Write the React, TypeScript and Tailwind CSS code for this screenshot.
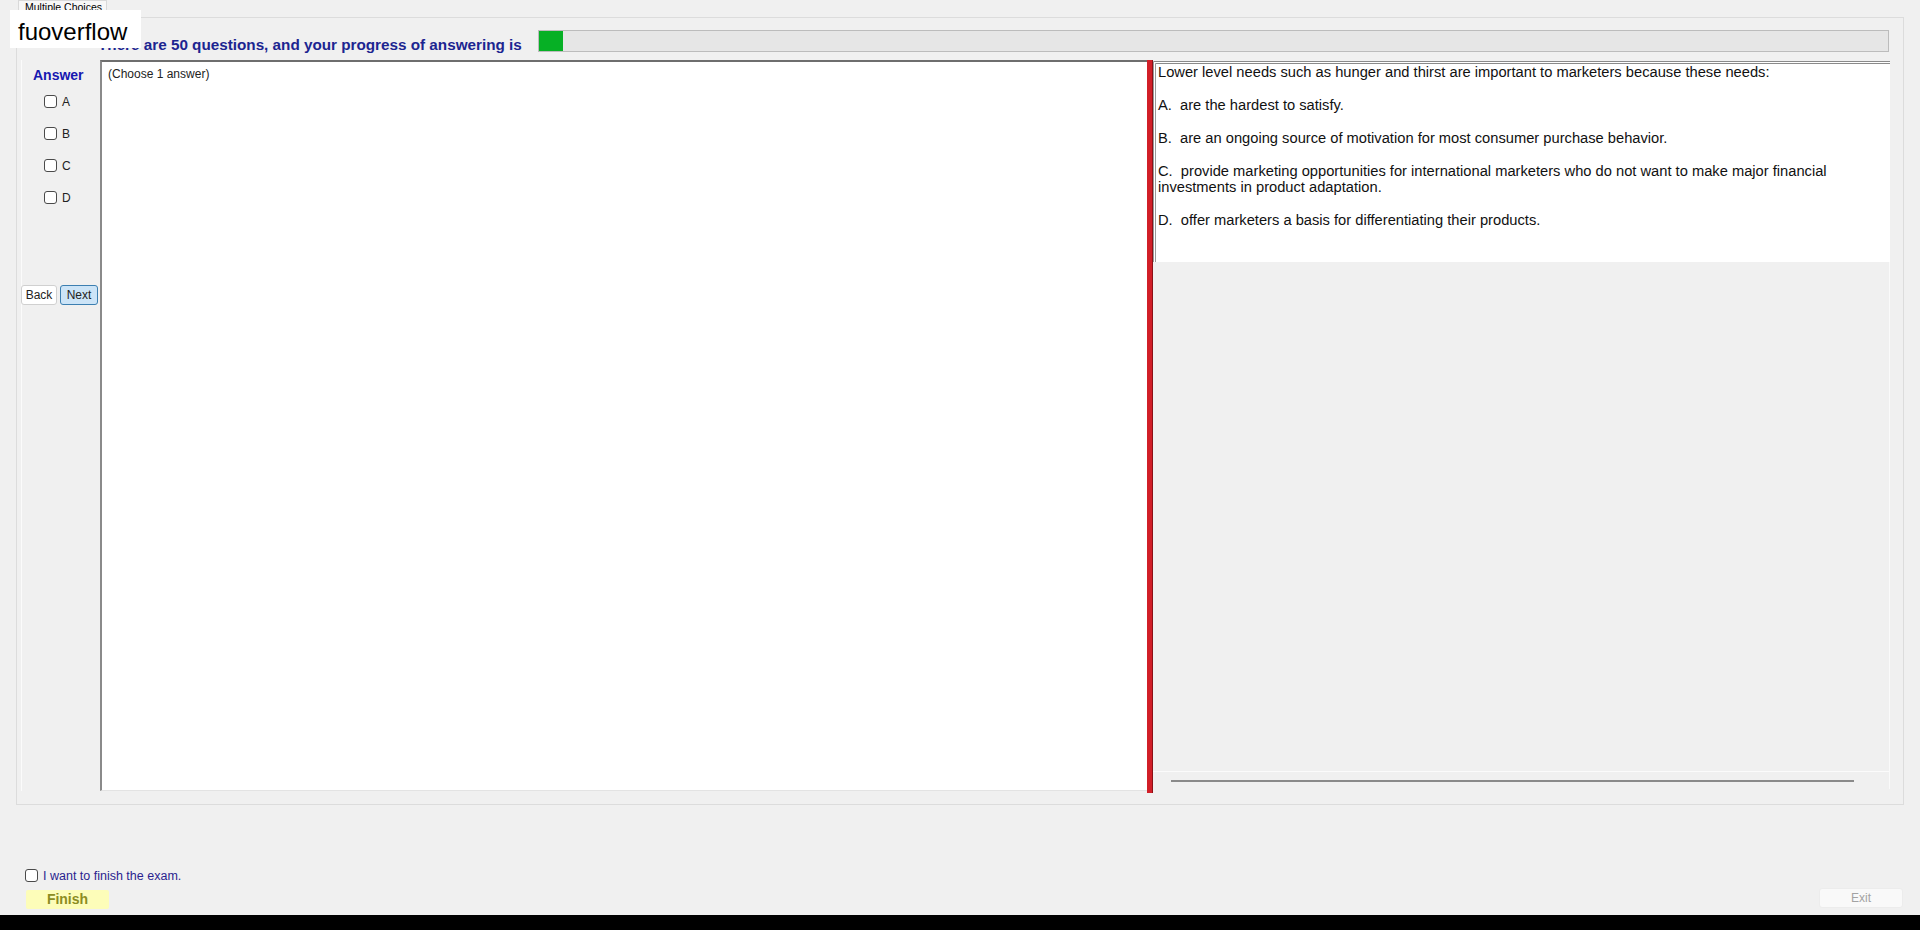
import React from "react";

const Box = () => (
  <span className="inline-block w-[13px] h-[13px] rounded-[3px] border border-[#4a4a4a] bg-white" />
);

const options = [
  "A.  are the hardest to satisfy.",
  "B.  are an ongoing source of motivation for most consumer purchase behavior.",
  "C.  provide marketing opportunities for international marketers who do not want to make major financial investments in product adaptation.",
  "D.  offer marketers a basis for differentiating their products.",
];

export default function App() {
  return (
    <div className="relative w-[1920px] h-[930px] bg-[#f0f0f0] flex flex-col overflow-hidden font-['Liberation_Sans',Arial,sans-serif] text-black">
      {/* tab strip */}
      <div className="h-[17px] pl-[18px] flex items-end">
        <div className="h-[17px] w-[89px] border border-b-0 border-[#d9d9d9] bg-[#f7f7f7] text-[10.5px] leading-[13px] pl-[6px] overflow-hidden">
          Multiple Choices
        </div>
      </div>

      {/* tab page */}
      <div className="mx-[16px] h-[788px] border border-[#dcdcdc] flex flex-col">
        {/* progress header */}
        <div className="h-[42px] flex items-start">
          <div className="pl-[81px] pt-[18px] text-[15.25px] leading-[17px] font-bold text-[#1c2590] w-[521px] whitespace-nowrap">
            There are 50 questions, and your progress of answering is
          </div>
          <div className="mt-[12px] h-[22px] flex-1 mr-[14px] border border-[#bcbcbc] bg-[#e6e6e6]">
            <div className="h-full w-[24px] bg-[#06b025]" />
          </div>
        </div>

        {/* body */}
        <div className="flex h-[731px]">
          {/* answer column */}
          <div className="w-[83px] flex flex-col">
            <div className="ml-[4px] flex-1 border-l border-[#fbfbfb] flex flex-col">
              <div className="pt-[6px] pl-[11px] text-[14px] font-bold text-[#1717b0] leading-[18px]">
                Answer
              </div>
              <div className="pl-[22px] pt-[11px] flex flex-col gap-[19px]">
                {["A", "B", "C", "D"].map((l) => (
                  <div key={l} className="flex items-center gap-[5px] h-[13px]">
                    <Box />
                    <span className="text-[12px] text-[#222]">{l}</span>
                  </div>
                ))}
              </div>
              <div className="mt-[81px] flex gap-[3px] -ml-[1px]">
                <button className="w-[36px] h-[20px] bg-white border border-[#d0d0d0] rounded-[3px] text-[12px] text-[#222]">
                  Back
                </button>
                <button className="w-[38px] h-[20px] bg-[#cce4f7] border border-[#3c7fb1] rounded-[3px] text-[12px] text-[#222]">
                  Next
                </button>
              </div>
            </div>
          </div>

          {/* question panel left */}
          <div className="w-[1047px] bg-white border-t-2 border-l-2 border-t-[#6e6e6e] border-l-[#8a8a8a] border-b border-b-[#e3e3e3]">
            <div className="pl-[6px] pt-[5px] text-[12px] leading-[15px] text-[#222]">
              (Choose 1 answer)
            </div>
          </div>

          {/* splitter */}
          <div className="w-[6px] h-[733px] bg-[#d11f28] border-r border-[#8c1016]" />

          {/* question panel right */}
          <div className="w-[737px] flex flex-col">
            <div className="mt-[1px] bg-white border-t-[3px] border-l-[3px] border-t-[#8a8a8a] border-l-[#9a9a9a] border-double pl-[2px] pr-[20px] pb-[34px] text-[14.7px] leading-[16px] text-[#111]">
              <p>Lower level needs such as hunger and thirst are important to marketers because these needs:</p>
              {options.map((o) => (
                <p key={o} className="mt-[17px] whitespace-pre-wrap">
                  {o}
                </p>
              ))}
            </div>
            <div className="flex-1 border-r border-[#fafafa]" />
            <div className="h-[18px] mb-[2px] border-t border-[#fbfbfb] border-r border-r-[#fafafa] flex items-center pl-[18px] pr-[35px]">
              <div className="h-[2px] w-full bg-[#8a8a8a]" />
            </div>
          </div>
        </div>
      </div>

      {/* footer */}
      <div className="flex-1 flex items-end justify-between pb-[6px]">
        <div className="pl-[25px] flex flex-col">
          <div className="flex items-center gap-[5px] h-[13px]">
            <Box />
            <span className="text-[12.5px] text-[#2b1f8f] pt-[1px]">I want to finish the exam.</span>
          </div>
          <div className="mt-[8px] ml-[1px] w-[83px] h-[19px] bg-[#fdfdb9] rounded-[2px] flex items-center justify-center text-[14px] font-bold text-[#8c8c22]">
            Finish
          </div>
        </div>
        <div className="mr-[17px] mb-[1px] w-[84px] h-[20px] bg-[#f9f9f9] border border-[#ececec] rounded-[3px] flex items-center justify-center text-[12px] text-[#a3a3a3]">
          Exit
        </div>
      </div>
      <div className="h-[15px] bg-black" />

      {/* watermark */}
      <div className="absolute left-[10px] top-[10px] w-[131px] h-[38px] bg-white pl-[8px] pt-[8px] text-[24px] leading-[28px]">
        fuoverflow
      </div>
    </div>
  );
}
